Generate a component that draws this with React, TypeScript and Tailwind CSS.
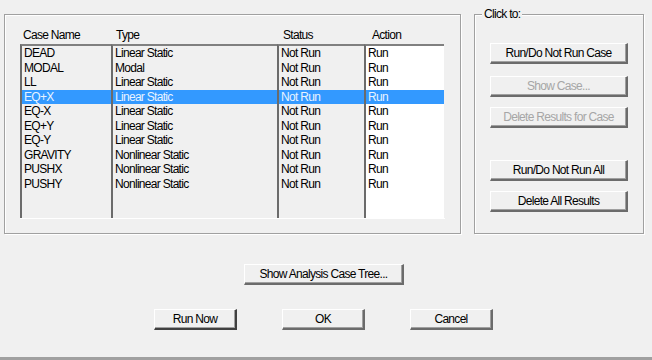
const cases = [
  { name: 'DEAD', type: 'Linear Static' },
  { name: 'MODAL', type: 'Modal' },
  { name: 'LL', type: 'Linear Static' },
  { name: 'EQ+X', type: 'Linear Static' },
  { name: 'EQ-X', type: 'Linear Static' },
  { name: 'EQ+Y', type: 'Linear Static' },
  { name: 'EQ-Y', type: 'Linear Static' },
  { name: 'GRAVITY', type: 'Nonlinear Static' },
  { name: 'PUSHX', type: 'Nonlinear Static' },
  { name: 'PUSHY', type: 'Nonlinear Static' },
]

const selected = 3

const columns = [
  { title: 'Case Name', width: 'w-[91px]', head: 'pl-[3px]', bg: 'bg-[#f0f0f0]', get: (c: { name: string }) => c.name },
  { title: 'Type', width: 'w-[166px]', head: 'pl-[5px]', bg: 'bg-[#f0f0f0]', get: (c: { type: string }) => c.type },
  { title: 'Status', width: 'w-[87px]', head: 'pl-[6px]', bg: 'bg-[#f0f0f0]', get: () => 'Not Run' },
  { title: 'Action', width: 'w-[80px]', head: 'pl-[8px]', bg: 'bg-white', get: () => 'Run' },
]

function WinButton({ label, disabled, className = '' }: { label: string; disabled?: boolean; className?: string }) {
  return (
    <div
      className={`flex h-[21px] items-center justify-center whitespace-nowrap border-t border-l border-white border-r-2 border-b-2 border-r-[#6b6b6b] border-b-[#6b6b6b] bg-[#f0f0f0] shadow-[inset_-1px_-1px_0_#a0a0a0] ${
        disabled ? 'text-[#a6a6a6]' : 'text-black'
      } ${className}`}
    >
      {label}
    </div>
  )
}

export default function App() {
  return (
    <div
      className="relative flex h-[360px] w-[652px] flex-col overflow-hidden bg-[#f0f0f0] text-[12px] leading-none tracking-[-0.7px] text-black"
      style={{ fontFamily: '"Liberation Sans", Arial, sans-serif' }}
    >
      <div className="mt-[14px] flex pl-[4px]">
        {/* case list group */}
        <div className="h-[220px] w-[457px] border border-[#a0a0a0] px-[15px] pt-[11px] shadow-[inset_1px_1px_0_#fff,1px_1px_0_#fff]">
          <div className="flex h-[18px] items-center">
            {columns.map((col) => (
              <div key={col.title} className={`${col.width} ${col.head}`}>
                {col.title}
              </div>
            ))}
          </div>
          <div className="flex h-[175px] border-b border-white">
            {columns.map((col) => (
              <div key={col.title} className={`${col.width} ${col.bg} border-t-2 border-l-2 border-t-[#808080] border-l-[#6b6b6b]`}>
                {cases.map((c, i) => (
                  <div
                    key={c.name}
                    className={`flex h-[14.5px] items-center pl-[2px] ${i === selected ? 'bg-[#3399ff] text-[#e8f3ff]' : ''}`}
                  >
                    {col.get(c)}
                  </div>
                ))}
              </div>
            ))}
          </div>
        </div>

        {/* action group */}
        <div className="relative ml-[13px] h-[220px] w-[170px] border border-[#a0a0a0] px-[15px] pt-[28px] shadow-[inset_1px_1px_0_#fff,1px_1px_0_#fff]">
          <span className="absolute top-[-7px] left-[7px] bg-[#f0f0f0] px-[2px]">Click to:</span>
          <WinButton label="Run/Do Not Run Case" />
          <WinButton label="Show Case..." disabled className="mt-[12px]" />
          <WinButton label="Delete Results for Case" disabled className="mt-[10px]" />
          <WinButton label="Run/Do Not Run All" className="mt-[32px]" />
          <WinButton label="Delete All Results" className="mt-[10px]" />
        </div>
      </div>

      <div className="mt-[30px] pl-[244px]">
        <WinButton label="Show Analysis Case Tree..." className="w-[160px]" />
      </div>

      <div className="mt-[24px] flex gap-[45px] pl-[154px]">
        <WinButton label="Run Now" className="w-[83px] border-r-[#404040] border-b-[#404040]" />
        <WinButton label="OK" className="w-[83px]" />
        <WinButton label="Cancel" className="w-[83px]" />
      </div>

      <div className="mt-auto h-[3px] bg-[#a0a0a0]" />
    </div>
  )
}
